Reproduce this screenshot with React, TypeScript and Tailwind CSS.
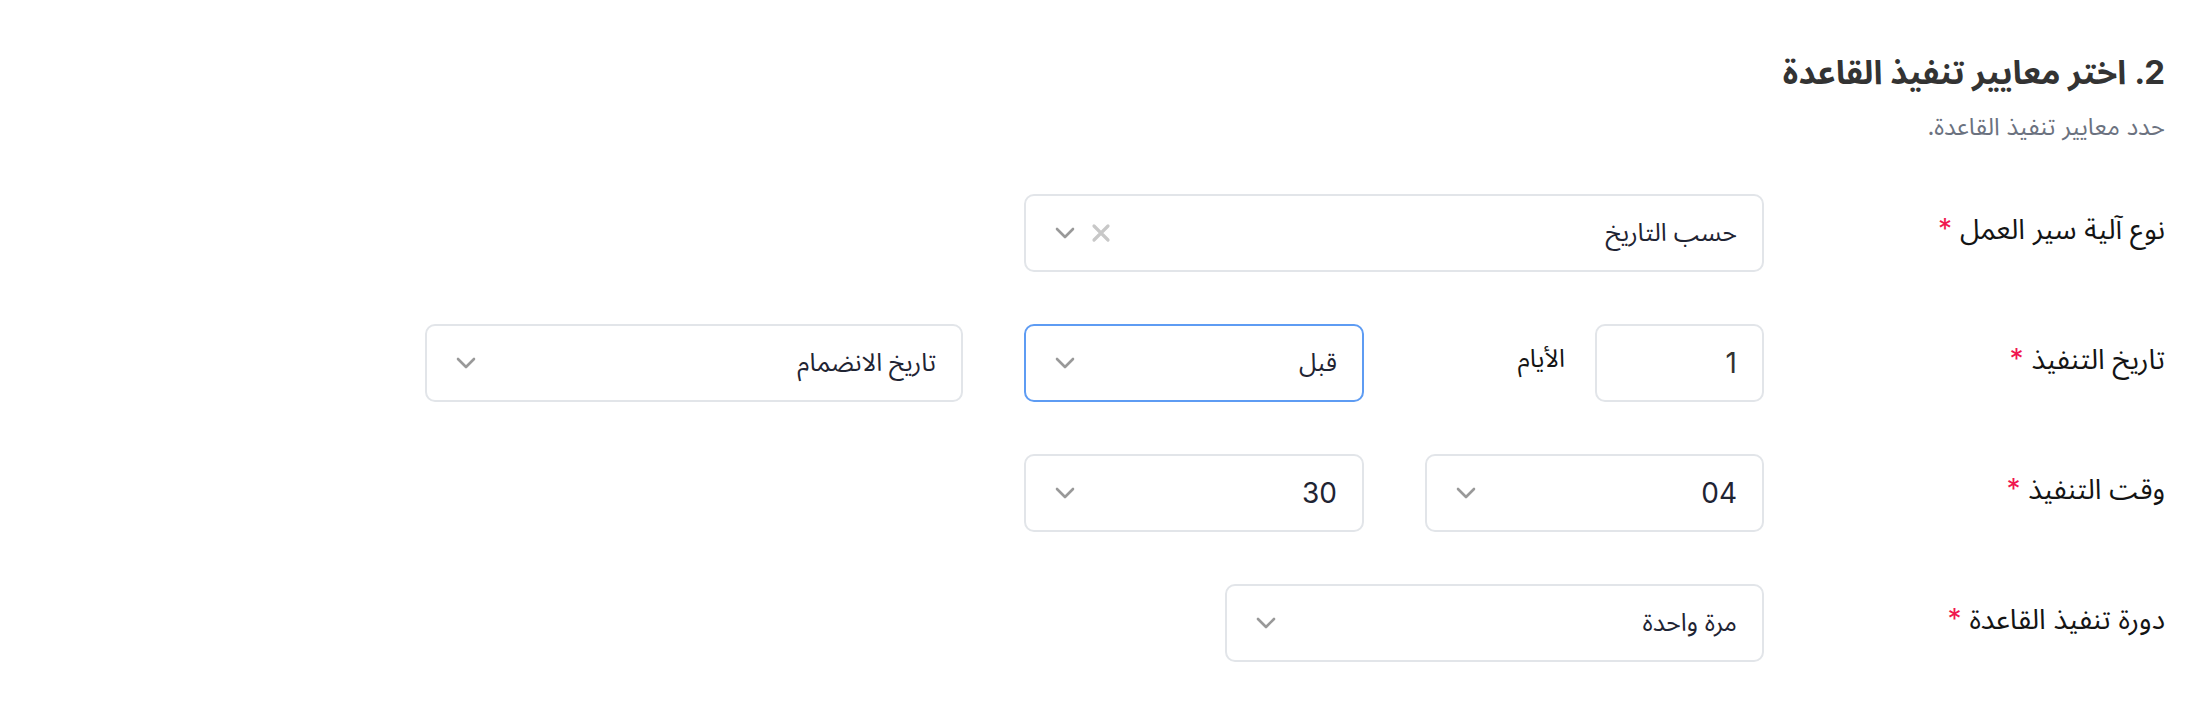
import { ReactNode } from "react";

function Chevron() {
    return (
        <svg width="20" height="12" viewBox="0 0 20 12" fill="none" className="shrink-0">
            <path d="M2 2 L10 10 L18 2" stroke="#999999" strokeWidth="2.6" strokeLinecap="round" strokeLinejoin="round" />
        </svg>
    );
}

function Cross() {
    return (
        <svg width="20" height="20" viewBox="0 0 20 20" fill="none" className="shrink-0">
            <path d="M3 3 L17 17 M17 3 L3 17" stroke="#c8c8c8" strokeWidth="3.2" strokeLinecap="round" />
        </svg>
    );
}

function Select({
    value,
    width,
    focused = false,
    clearable = false,
    digits = false,
}: {
    value: string;
    width: string;
    focused?: boolean;
    clearable?: boolean;
    digits?: boolean;
}) {
    return (
        <div
            className={`${width} h-[78px] shrink-0 flex items-center justify-between rounded-[10px] bg-white pr-[25px] pl-[29px] ${
                focused ? "border-2 border-[#5e9cf3]" : "border-2 border-[#e2e5e9]"
            }`}
        >
            <span className={`${digits ? "text-[28px]" : "text-[25px]"} text-[#1f2433]`}>{value}</span>
            <div className="flex items-center gap-[16px]">
                {clearable && <Cross />}
                <Chevron />
            </div>
        </div>
    );
}

function Row({ label, children }: { label: string; children: ReactNode }) {
    return (
        <div className="flex items-center h-[78px]">
            <div className="w-[401px] shrink-0 text-[28px] text-[#141414] -mt-[8px]">
                {label} <span className="text-[#f0174f]">*</span>
            </div>
            <div className="flex items-center gap-[61px]">{children}</div>
        </div>
    );
}

export default function App() {
    return (
        <div
            dir="rtl"
            className="min-h-screen bg-white pr-[39px] pt-[50px] font-['Inter','Noto_Sans_Arabic','DejaVu_Sans',sans-serif]"
        >
            <h2 className="text-[33px] leading-[44px] font-bold text-[#333333]">2. اختر معايير تنفيذ القاعدة</h2>
            <p className="mt-[16px] text-[24px] leading-[34px] text-[#6b7280]">حدد معايير تنفيذ القاعدة.</p>

            <div className="mt-[50px] flex flex-col gap-[52px]">
                <Row label="نوع آلية سير العمل">
                    <Select value="حسب التاريخ" width="w-[740px]" clearable />
                </Row>

                <Row label="تاريخ التنفيذ">
                    <div className="w-[339px] flex items-center gap-[30px]">
                        <div className="w-[169px] h-[78px] flex items-center rounded-[10px] border-2 border-[#e2e5e9] pr-[25px]">
                            <span className="text-[28px] text-[#333333]">1</span>
                        </div>
                        <span className="text-[25px] text-[#141414] -mt-[8px]">الأيام</span>
                    </div>
                    <Select value="قبل" width="w-[340px]" focused />
                    <Select value="تاريخ الانضمام" width="w-[538px]" />
                </Row>

                <Row label="وقت التنفيذ">
                    <Select value="04" width="w-[339px]" digits />
                    <Select value="30" width="w-[340px]" digits />
                </Row>

                <Row label="دورة تنفيذ القاعدة">
                    <Select value="مرة واحدة" width="w-[539px]" />
                </Row>
            </div>
        </div>
    );
}
